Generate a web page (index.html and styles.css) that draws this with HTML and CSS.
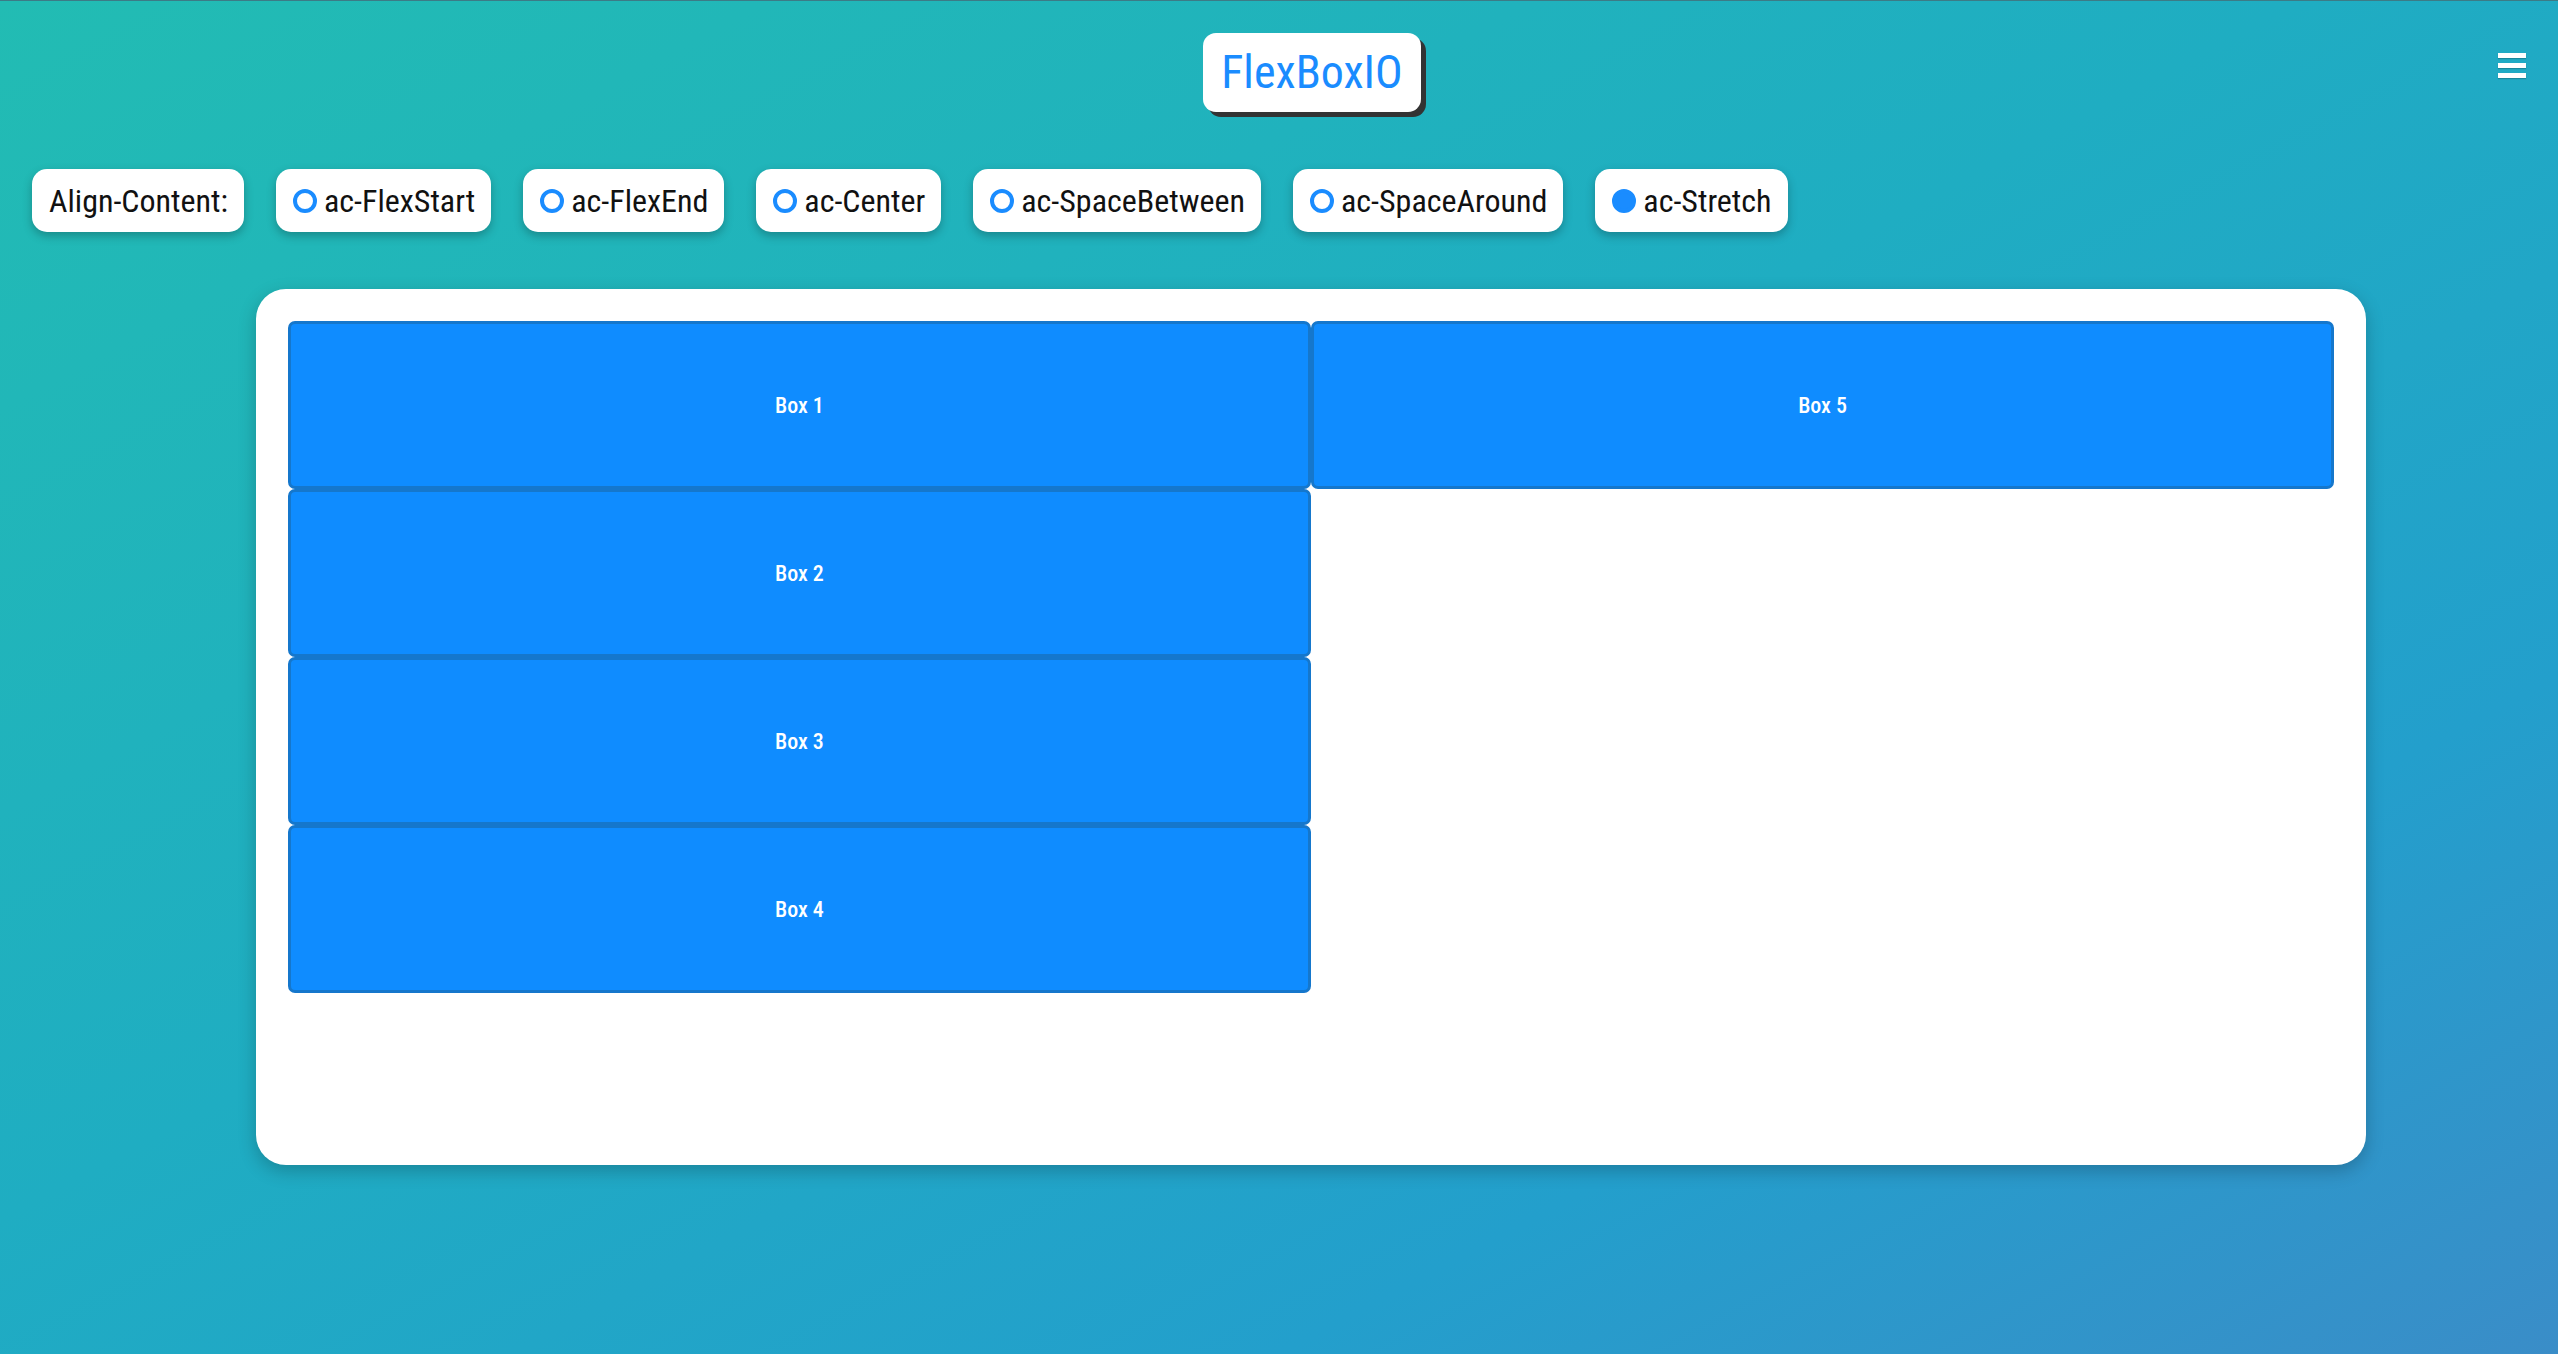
FILE: index.html
```html
<!DOCTYPE html>
<html lang="en">
<head>
<meta charset="utf-8">
<title>FlexBoxIO</title>
<link rel="stylesheet" href="styles.css">
</head>
<body>
<header class="header">
  <div class="spacer"></div>
  <h1 class="logo">FlexBoxIO</h1>
  <div class="menu" aria-label="menu"><span></span><span></span><span></span></div>
</header>
<nav class="options">
  <div class="pill">Align-Content:</div>
  <div class="pill"><span class="radio"></span>ac-FlexStart</div>
  <div class="pill"><span class="radio"></span>ac-FlexEnd</div>
  <div class="pill"><span class="radio"></span>ac-Center</div>
  <div class="pill"><span class="radio"></span>ac-SpaceBetween</div>
  <div class="pill"><span class="radio"></span>ac-SpaceAround</div>
  <div class="pill"><span class="radio checked"></span>ac-Stretch</div>
</nav>
<main class="stage">
  <div class="box">Box 1</div>
  <div class="box">Box 2</div>
  <div class="box">Box 3</div>
  <div class="box">Box 4</div>
  <div class="box">Box 5</div>
</main>
</body>
</html>
```
FILE: styles.css
```css
html, body {
  margin: 0;
  padding: 0;
}
body {
  min-height: 100vh;
  background: linear-gradient(to bottom right, #22bcb3 0%, #1fadc2 45%, #239fcc 75%, #3a8dc8 100%);
  font-family: "Roboto Condensed", Roboto, "Liberation Sans", sans-serif;
  font-stretch: 75%;
  border-top: 1px solid #3c7b86;
  box-sizing: border-box;
}
.header {
  display: flex;
  padding: 32px 0 0 98px;
}
.spacer {
  flex: 1;
}
.logo {
  margin: 0;
  background: #fff;
  color: #1a8cff;
  font-weight: 400;
  font-size: 46px;
  line-height: 79px;
  height: 79px;
  padding: 0 18px;
  border-radius: 13px;
  box-shadow: 5px 5px 0 #333;
}
.menu {
  flex: 1;
  align-self: flex-start;
  margin: 20px 32px 0 0;
  display: flex;
  flex-direction: column;
  align-items: flex-end;
  gap: 5px;
}
.menu span {
  display: block;
  width: 28px;
  height: 5px;
  background: #fff;
  box-shadow: 0 1px 1px rgba(0,0,0,0.2);
}
.options {
  display: flex;
  gap: 32px;
  padding-left: 32px;
  margin-top: 57px;
}
.pill {
  display: flex;
  align-items: center;
  gap: 7px;
  height: 63px;
  padding: 0 16px 0 17px;
  box-sizing: border-box;
  background: #fff;
  border-radius: 15px;
  font-size: 32px;
  color: #111;
  box-shadow: 0 4px 10px rgba(0,0,0,0.25);
}
.radio {
  width: 24px;
  height: 24px;
  box-sizing: border-box;
  border: 4px solid #1a8cff;
  border-radius: 50%;
}
.radio.checked {
  background: #1a8cff;
}
.stage {
  margin: 57px 0 0 10%;
  width: 80%;
  height: 60vh;
  padding: 32px;
  background: #fff;
  border-radius: 30px;
  box-shadow: 0 6px 18px rgba(0,0,0,0.22);
  display: flex;
  flex-direction: column;
  flex-wrap: wrap;
  align-content: stretch;
}
.box {
  height: 168px;
  box-sizing: border-box;
  border: 3px solid #1577cc;
  border-radius: 7px;
  background: #0f8cff;
  color: #fff;
  font-size: 22px;
  font-weight: 500;
  display: flex;
  align-items: center;
  justify-content: center;
}
```
